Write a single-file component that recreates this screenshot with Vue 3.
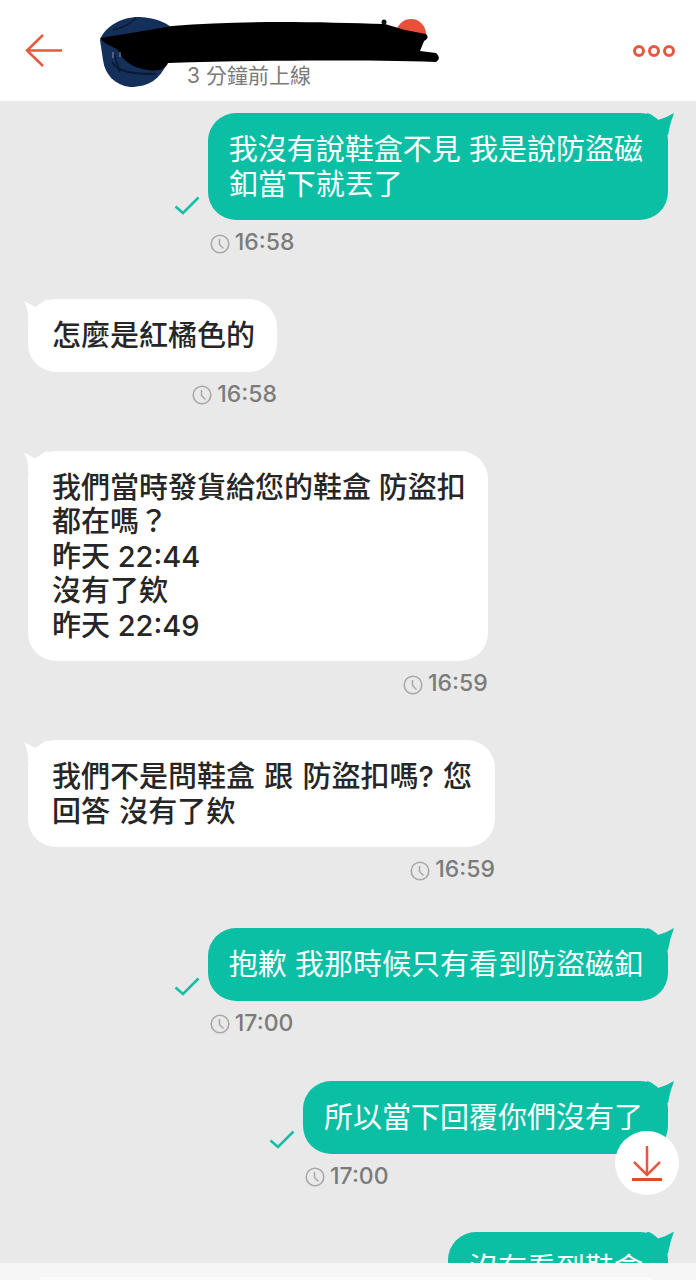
<script setup>
const messages = [
  { id: 1, out: true, lines: ['我沒有說鞋盒不見 我是說防盜磁', '釦當下就丟了'], time: '16:58' },
  { id: 2, out: false, lines: ['怎麼是紅橘色的'], time: '16:58' },
  { id: 3, out: false, lines: ['我們當時發貨給您的鞋盒 防盜扣', '都在嗎？', '昨天 22:44', '沒有了欸', '昨天 22:49'], time: '16:59' },
  { id: 4, out: false, lines: ['我們不是問鞋盒 跟 防盜扣嗎? 您', '回答 沒有了欸'], time: '16:59' },
  { id: 5, out: true, lines: ['抱歉 我那時候只有看到防盜磁釦'], time: '17:00' },
  { id: 6, out: true, lines: ['所以當下回覆你們沒有了'], time: '17:00' },
  { id: 7, out: true, lines: ['沒有看到鞋盒'], time: '' }
]
</script>

<template>
  <div class="page">
    <header class="header">
      <svg class="back" width="40" height="36" viewBox="0 0 40 36" fill="none">
        <path d="M38 17.500H3M19 2 3 17.500 19 33" stroke="#e8583e" stroke-width="2.500" />
      </svg>
      <div class="title">
        <div class="status">3 分鐘前上線</div>
      </div>
      <svg class="more" width="44" height="14" viewBox="0 0 44 14" fill="none">
        <circle cx="7" cy="7" r="4.500" stroke="#e8583e" stroke-width="3" />
        <circle cx="22" cy="7" r="4.500" stroke="#e8583e" stroke-width="3" />
        <circle cx="37" cy="7" r="4.500" stroke="#e8583e" stroke-width="3" />
      </svg>
      <svg class="scribble" width="360" height="90" viewBox="100 0 360 90">
        <circle cx="411" cy="34" r="15" fill="#e8503a" />
        <path d="M100 40 C105 25 125 16 140 17 C155 18 165 22 171 27 L166 65 C160 78 150 87 130 87 C115 85 105 75 103 60 Z" fill="#14305a" />
        <path d="M112 62 C118 72 132 74 156 74" stroke="#0a1a30" stroke-width="2" fill="none" />
        <path d="M113 30 C122 28 130 24 136 18M120 72 C118 66 116 60 114 54" stroke="#0a1a30" stroke-width="1.500" fill="none" />
        <path d="M100 38 C125 34 150 30 172 26 C240 20 320 22 385 24 L405 30 L426 34 Q430 38 424 41 L420 51 L436 53 Q442 58 436 62 C360 60 270 60 168 63 C166 68 160 72 148 70 C132 68 122 60 118 50 C112 46 104 44 100 38Z" fill="#000" />
        <path d="M113 52v6M120 52v5" stroke="#8a97a8" stroke-width="1" fill="none" />
        <circle cx="384" cy="22" r="2.500" fill="#111" />
      </svg>
    </header>

    <main class="chat">
      <div v-for="m in messages" :key="m.id" class="message" :class="m.out ? 'out' : 'in'">
        <div class="stack">
          <div class="bubble">
            <svg v-if="m.out" class="check" width="26" height="19" viewBox="0 0 26 19" fill="none">
              <path d="M1.500 10.500 9 17 24.500 1.500" stroke="#0dbfa5" stroke-width="2.500" />
            </svg>
            <div v-for="(line, i) in m.lines" :key="i" class="line">{{ line }}</div>
          </div>
          <div v-if="m.time" class="time">
            <svg class="clock" width="20" height="20" viewBox="0 0 20 20" fill="none">
              <circle cx="10" cy="10" r="8.800" stroke="#a8a8a8" stroke-width="1.600" />
              <path d="M9.500 5v5.500l4 4" stroke="#a8a8a8" stroke-width="1.500" />
            </svg>
            <span>{{ m.time }}</span>
          </div>
        </div>
      </div>
    </main>

    <button class="scroll-down" type="button" aria-label="scroll to bottom">
      <svg width="32" height="36" viewBox="0 0 32 36" fill="none">
        <path d="M16 1v29M3 17l13 13 13-13" stroke="#e8583e" stroke-width="2.500" />
        <path d="M1 34.500h30" stroke="#e0492f" stroke-width="3" />
      </svg>
    </button>

    <footer class="footer">
      <div class="input"></div>
    </footer>
  </div>
</template>

<style scoped>
.page {
  position: relative;
  width: 696px;
  height: 1280px;
  display: flex;
  flex-direction: column;
  overflow: hidden;
  background: #e9e9e9;
  font-family: Inter, "Noto Sans CJK TC", sans-serif;
}
.header {
  position: relative;
  flex: none;
  height: 101px;
  display: flex;
  align-items: flex-start;
  padding: 0 20px 0 24px;
  box-sizing: border-box;
  background: #fff;
}
.back {
  flex: none;
  margin-top: 33px;
}
.title {
  flex: 1;
  padding: 63px 0 0 123px;
}
.status {
  font-size: 21px;
  line-height: 26px;
  color: #7a7a7a;
}
.more {
  flex: none;
  margin-top: 44px;
}
.scribble {
  position: absolute;
  left: 100px;
  top: 0;
}
.chat {
  flex: 1;
  min-height: 0;
  overflow: hidden;
  padding: 12px 28px 0;
}
.message {
  display: flex;
  margin-bottom: 43px;
}
.message:nth-child(4) {
  margin-bottom: 45px;
}
.message:nth-child(5) {
  margin-bottom: 44.500px;
}
.message:nth-child(6) {
  margin-bottom: 42px;
}
.message.out {
  justify-content: flex-end;
}
.message.in {
  justify-content: flex-start;
}
.stack {
  display: flex;
  flex-direction: column;
}
.check {
  position: absolute;
  right: 100%;
  bottom: 5px;
  margin-right: 8px;
}
.bubble {
  position: relative;
  padding: 20px 22px 18px 24px;
  border-radius: 28px;
  font-size: 29px;
  line-height: 34.500px;
  white-space: nowrap;
}
.bubble::before {
  content: "";
  position: absolute;
  top: 0;
  width: 30px;
  height: 24px;
}
.in .bubble {
  background: #fff;
  color: #262626;
  font-weight: 500;
}
.in .bubble::before {
  left: -5px;
  background: #fff;
  clip-path: path("M1 2 Q7 5 12 8 Q17 5 24 0 L30 22 L5 22 Q6 12 1 2Z");
}
.message:nth-child(4) .bubble {
  padding-right: 23px;
  word-spacing: 1.500px;
}
.out .bubble {
  background: #0abfa4;
  color: #fff;
  padding: 20px 25px 18px 21px;
}
.out .bubble::before {
  right: -6px;
  background: #0abfa4;
  clip-path: path("M3 0 Q8 1 14 7 Q22 5 30 0 Q26 10 24 22 L0 22Z");
}
.time {
  display: flex;
  align-items: center;
  gap: 5px;
  height: 28px;
  margin-top: 8px;
  font-size: 23px;
  font-weight: 500;
  color: #7b7b7b;
}
.clock {
  margin: 3px 0 0 2px;
}
.in .time {
  justify-content: flex-end;
}
.scroll-down {
  position: absolute;
  left: 615px;
  top: 1131px;
  width: 64px;
  height: 64px;
  display: flex;
  align-items: center;
  justify-content: center;
  padding: 0;
  border: 0;
  border-radius: 50%;
  background: #fff;
}
.footer {
  position: relative;
  flex: none;
  height: 17px;
  padding: 14px 44px 0 40px;
  box-sizing: border-box;
  background: #f6f6f6;
}
.input {
  height: 3px;
  background: #fcfcfc;
}
</style>
